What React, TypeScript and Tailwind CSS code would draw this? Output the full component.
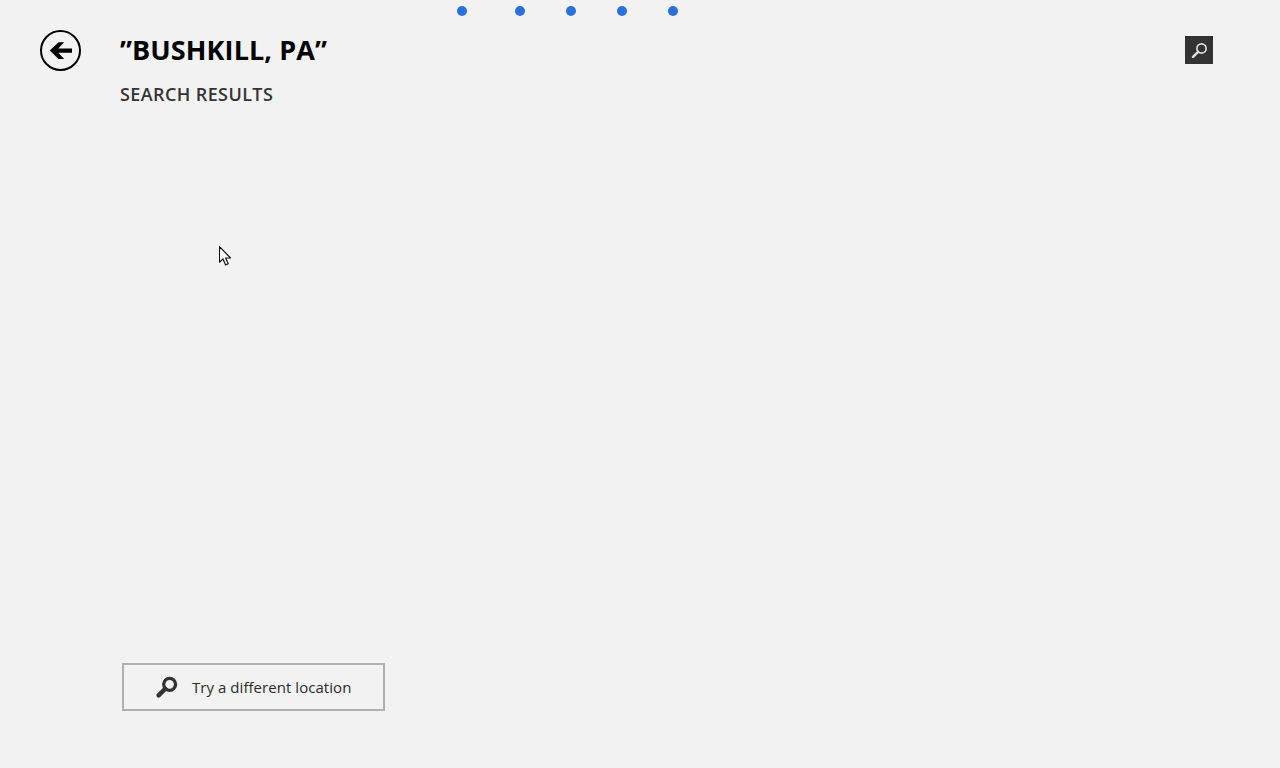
import React from "react";

const font = { fontFamily: '"Open Sans", "Noto Sans", sans-serif' };

function Dots() {
  return (
    <div className="flex h-[22px] items-center pl-[457px]">
      <div className="h-[10px] w-[10px] rounded-full bg-[#2a6fdc]" />
      <div className="ml-[48px] h-[10px] w-[10px] rounded-full bg-[#2a6fdc]" />
      <div className="ml-[41px] h-[10px] w-[10px] rounded-full bg-[#2a6fdc]" />
      <div className="ml-[41px] h-[10px] w-[10px] rounded-full bg-[#2a6fdc]" />
      <div className="ml-[41px] h-[10px] w-[10px] rounded-full bg-[#2a6fdc]" />
    </div>
  );
}

function BackIcon() {
  return (
    <svg width="41" height="41" viewBox="0 0 41 41" fill="none">
      <circle cx="20.5" cy="20.5" r="19.5" stroke="#000" strokeWidth="2" />
      <path d="M32 18.4H18.2L24.2 12.2H18.6L9.8 20.6L18.6 29H24.2L18.2 22.8H32Z" fill="#000" />
    </svg>
  );
}

function Lens({ size, color, stroke }: { size: number; color: string; stroke: number }) {
  return (
    <svg width={size} height={size} viewBox="0 0 20 20" fill="none">
      <circle cx="12.4" cy="7.6" r="5.4" stroke={color} strokeWidth={stroke} />
      <path d="M8.4 11.6L2.4 17.6" stroke={color} strokeWidth={stroke + 1} strokeLinecap="round" />
    </svg>
  );
}

function Cursor() {
  return (
    <svg className="absolute left-[219px] top-[246px]" width="13" height="20" viewBox="0 0 13 20">
      <path d="M0.5 0.7V16.2L4 12.9L6.6 18.9L9.2 17.8L6.6 12H11.5Z" fill="#fff" stroke="#111" strokeWidth="1.2" strokeLinejoin="round" />
    </svg>
  );
}

export default function App() {
  return (
    <div className="relative flex h-[768px] w-[1280px] flex-col overflow-hidden bg-[#f2f2f2]" style={font}>
      <Dots />
      <div className="flex items-start pl-[40px] pt-[8px]">
        <div className="w-[80px] shrink-0">
          <BackIcon />
        </div>
        <div className="flex-1">
          <h1 className="text-[27px] leading-[39px] font-bold tracking-[0.1px] text-black">”BUSHKILL, PA”</h1>
          <h2 className="mt-[11px] text-[18px] leading-[28px] font-semibold tracking-[0.4px] text-[#333333]">SEARCH RESULTS</h2>
        </div>
        <div className="mr-[67px] mt-[6px] flex h-[28px] w-[28px] items-center justify-center bg-[#333333]">
          <Lens size={17} color="#dddddd" stroke={2} />
        </div>
      </div>
      <div className="mt-auto mb-[57px] ml-[122px]">
        <button className="flex h-[48px] w-[263px] items-center border-2 border-[#b0b0b0] pl-[32px] text-[15px] font-medium tracking-[0.05px] text-[#2b2b2b]">
          <Lens size={22} color="#333333" stroke={3} />
          <span className="ml-[14px]">Try a different location</span>
        </button>
      </div>
      <Cursor />
    </div>
  );
}
